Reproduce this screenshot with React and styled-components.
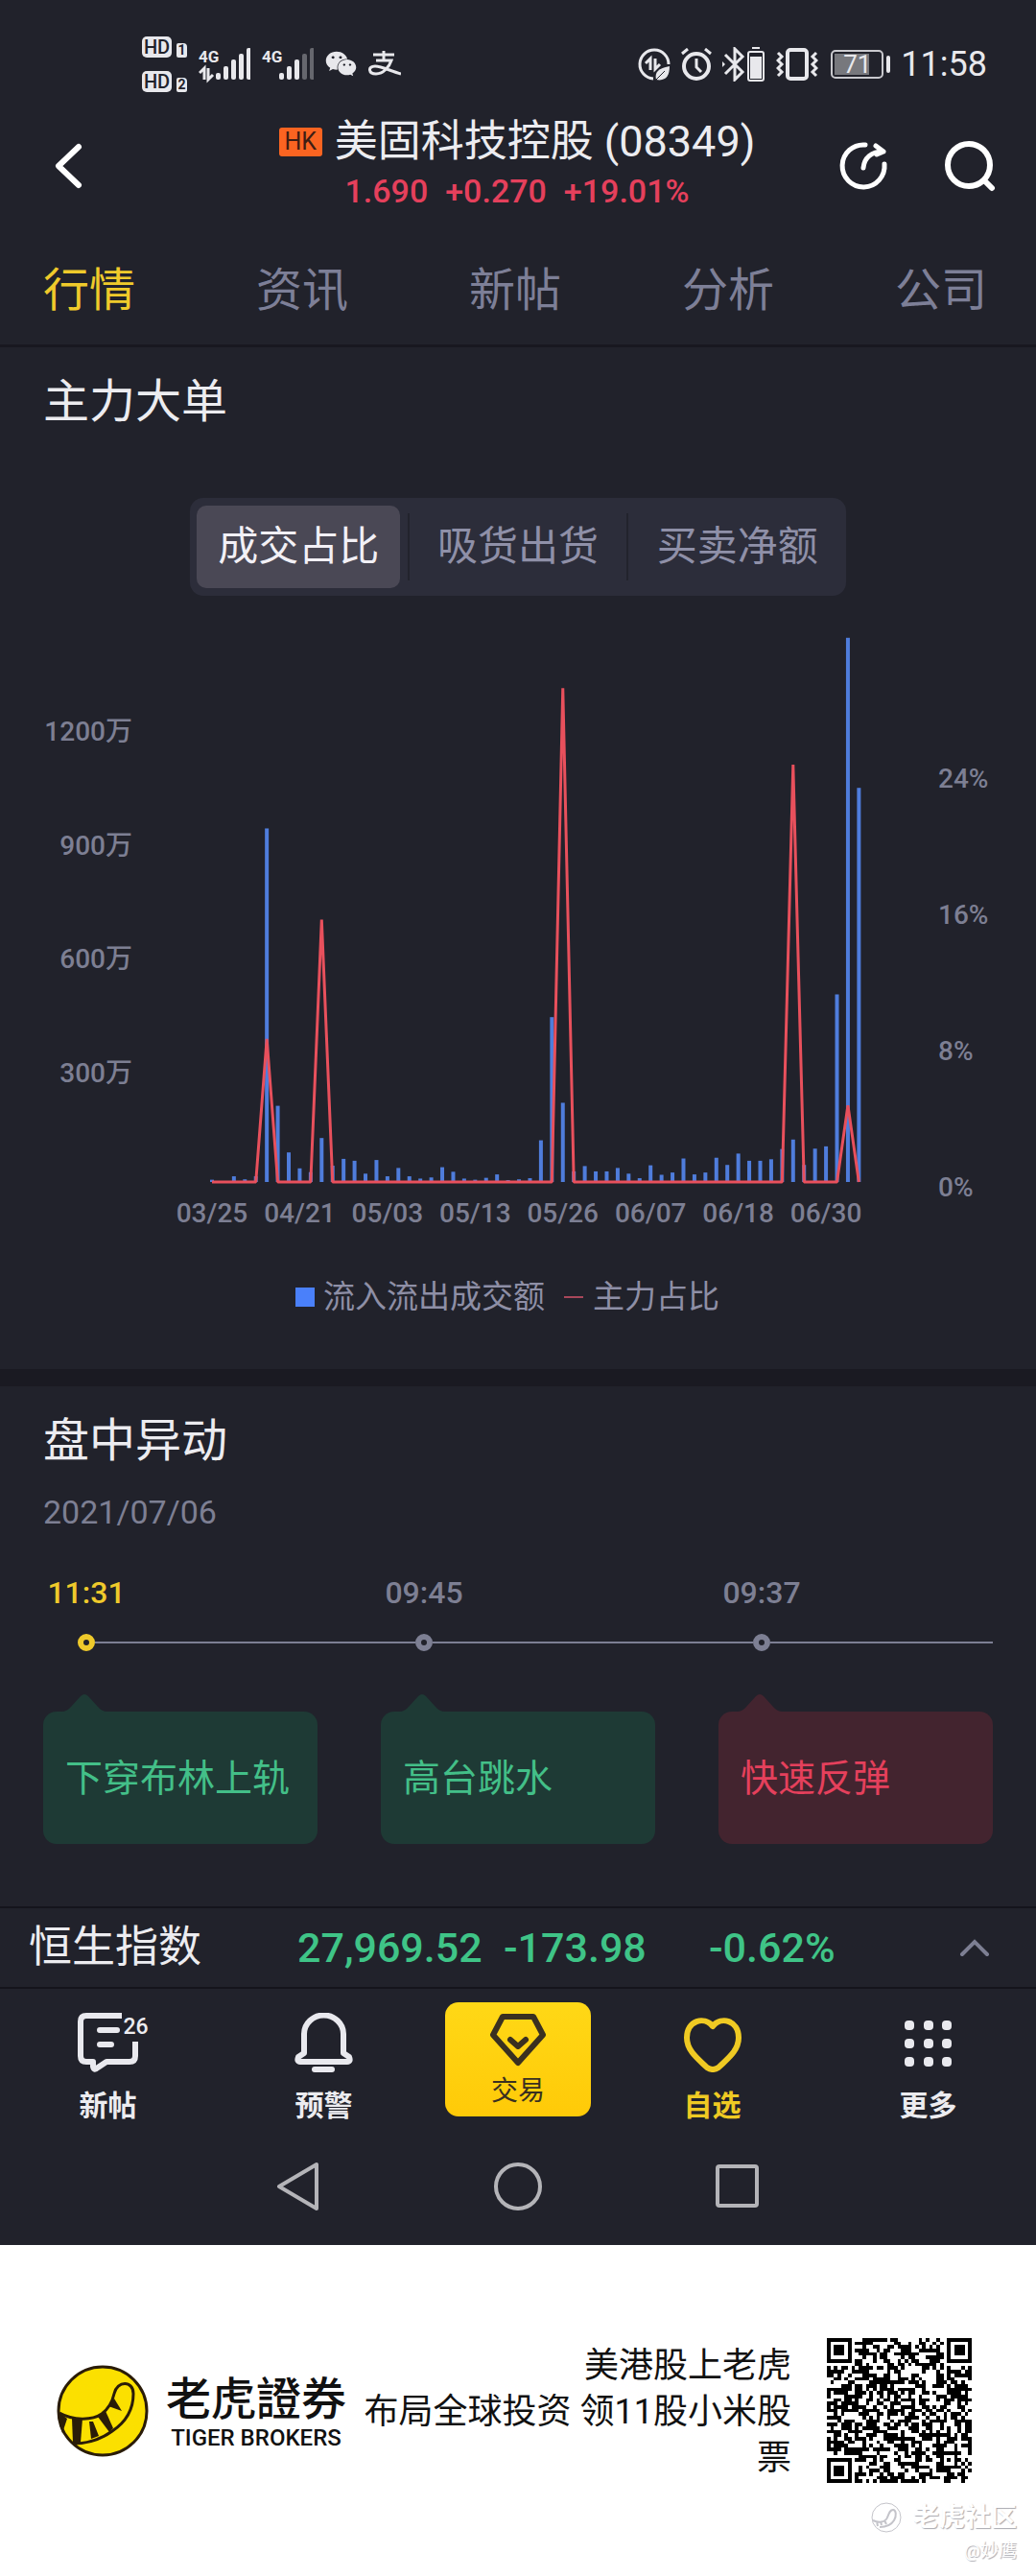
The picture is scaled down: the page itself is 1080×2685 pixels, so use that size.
import React, { useState } from 'react';
import styled, { createGlobalStyle } from 'styled-components';
import { FaWeixin } from 'react-icons/fa';

const tabs = ['行情', '资讯', '新帖', '分析', '公司'];
const modes = ['成交占比', '吸货出货', '买卖净额'];

// turnover per day, in units of 万
const turnover = [
    6, 0, 15, 7, 15, 933, 201, 78, 36, 26, 116, 43, 61, 56, 22,
    58, 15, 37, 15, 9, 12, 39, 27, 9, 6, 11, 20, 5, 7, 10,
    110, 435, 209, 28, 42, 28, 28, 37, 22, 10, 44, 19, 25, 62, 20,
    25, 64, 45, 75, 56, 56, 60, 87, 112, 45, 88, 94, 495, 1436, 1040,
];
// share of big orders in %, all other days are 0
const share = { 5: 8.4, 10: 15.4, 32: 29, 53: 24.5, 58: 4.5 };
const dates = ['03/25', '04/21', '05/03', '05/13', '05/26', '06/07', '06/18', '06/30'];

const events = [
    { time: '11:31', text: '下穿布林上轨', active: true },
    { time: '09:45', text: '高台跳水' },
    { time: '09:37', text: '快速反弹', up: true },
];

const BASE = 611;
const dayX = (i) => 221 + i * 11.43;

const Chart = () => {
    const line = turnover
        .map((v, i) => `${dayX(i)},${BASE - (share[i] || 0) * 17.75}`)
        .join(' ');
    return (
        <ChartSvg viewBox="0 0 1080 679" role="img" aria-label="成交占比">
            {[1200, 900, 600, 300].map((v) => (
                <text key={v} x="138" y={625 - v * 0.395} textAnchor="end">{v}万</text>
            ))}
            {[24, 16, 8, 0].map((v) => (
                <text key={v} x="978" y={626 - v * 17.75}>{v}%</text>
            ))}
            {turnover.map((v, i) => (
                <rect key={i} x={dayX(i) - 2} y={BASE - v * 0.395} width="4" height={v * 0.395} fill="#4f7ddc" />
            ))}
            <polyline points={line} fill="none" stroke="#e8505c" strokeWidth="3" strokeLinejoin="bevel" />
            {dates.map((d, i) => (
                <text key={d} x={dayX(i * 8)} y="653" textAnchor="middle">{d}</text>
            ))}
        </ChartSvg>
    );
};

const Signal = ({ level, data }) => (
    <svg width="54" height="46" viewBox="0 -6 54 46" fill="#e8e8ec">
        <text x="0" y="15" fontSize="17" fontWeight="700">4G</text>
        {data && <path d="M1 26l5-5v12M10 21v12l5-5" fill="none" stroke="#e8e8ec" strokeWidth="3" />}
        {[26, 19, 12, 6, 0].map((y, i) => (
            <rect key={y} x={18 + i * 8} y={y} width="5" height={33 - y} rx="2" opacity={i < level ? 1 : 0.35} />
        ))}
    </svg>
);

const Alipay = () => (
    <svg width="34" height="27" viewBox="0 0 34 27" fill="none" stroke="#e8e8ec" strokeWidth="3">
        <path d="M16 0v10M5 4h22M8 10h16c-2 6-8 14-16 14-8 0-9-8-1-8 7 0 16 5 27 8" />
    </svg>
);

const DataSaver = () => (
    <svg width="34" height="34" viewBox="0 0 34 34" fill="none" stroke="#e8e8ec" strokeWidth="3">
        <path d="M16 32A15 15 0 1 1 32 17" />
        <path d="M8 16l5-5v12M18 11v11l5-5" />
        <path d="M19 33c-2-9 4-12 14-14 0 10-4 16-14 14z" fill="#e8e8ec" stroke="none" />
        <path d="M19 33l9-9" stroke="#21222b" strokeWidth="1" />
    </svg>
);

const Alarm = () => (
    <svg width="34" height="34" viewBox="0 0 34 34" fill="none" stroke="#e8e8ec" strokeWidth="4">
        <circle cx="17" cy="19" r="13" />
        <path d="M17 11v9l5 5" strokeWidth="3" />
        <path d="M2 6l6-5M32 6l-6-5" strokeWidth="3" />
    </svg>
);

const Bluetooth = () => (
    <svg width="46" height="36" viewBox="0 0 46 36" fill="none" stroke="#e8e8ec">
        <path d="M3 8l18 18-8 8V2l8 8L3 28" strokeWidth="3" />
        <path d="M0 15v6l3-3z" fill="#e8e8ec" stroke="none" />
        <rect x="27" y="5" width="16" height="30" rx="2" strokeWidth="2" />
        <path d="M31 1h8" strokeWidth="2" />
        <path d="M29 10h12v23h-12z" fill="#e8e8ec" stroke="none" />
    </svg>
);

const Vibrate = () => (
    <svg width="44" height="36" viewBox="0 0 44 36" fill="none" stroke="#e8e8ec" strokeWidth="3">
        <rect x="12" y="3" width="20" height="30" rx="3" strokeWidth="4" />
        <path d="M2 6l4 4-4 4 4 4-4 4 4 4-4 4M42 6l-4 4 4 4-4 4 4 4-4 4 4 4" />
    </svg>
);

const Back = () => (
    <svg width="34" height="50" viewBox="0 0 34 50" fill="none" stroke="#fff" strokeWidth="6" strokeLinecap="round" strokeLinejoin="round">
        <path d="M28 5L7 25l21 20" />
    </svg>
);

const Share = () => (
    <svg width="52" height="52" viewBox="0 0 52 52" fill="none" stroke="#fff" strokeWidth="5" strokeLinecap="round" strokeLinejoin="round">
        <path d="M28 4A22 22 0 1 0 48 24" />
        <path d="M26 28c1-10 8-17 21-17M39 5l8 6-7 3" />
    </svg>
);

const Search = () => (
    <svg width="54" height="54" viewBox="0 0 54 54" fill="none" stroke="#fff" strokeWidth="6" strokeLinecap="round">
        <circle cx="26" cy="26" r="22" />
        <path d="M43 43l7 7" />
    </svg>
);

const PostIcon = () => (
    <svg width="64" height="62" viewBox="0 0 64 62" fill="none" stroke="#e9e9ee" strokeWidth="6" strokeLinecap="round" strokeLinejoin="round">
        <path d="M46 3H9q-6 0-6 6v36q0 6 6 6h7v5q1 5 5 1l9-6h24q6 0 6-6V30" strokeLinecap="butt" />
        <path d="M23 18h18M23 33h12" />
    </svg>
);

const BellIcon = () => (
    <svg width="62" height="62" viewBox="0 0 62 62" fill="none" stroke="#e9e9ee" strokeWidth="6" strokeLinecap="round" strokeLinejoin="round">
        <path d="M10 42V22a20 19 0 0 1 41 0v20l6 4q2 5-2 5H6q-4 0-2-5z" />
        <path d="M21 59h18" />
    </svg>
);

const DiamondIcon = () => (
    <svg width="60" height="56" viewBox="0 0 60 56" fill="none" stroke="#3a3020" strokeWidth="6" strokeLinecap="round" strokeLinejoin="round">
        <path d="M14 4h32l10 19-26 29L4 23z" />
        <path d="M22 28l8 7 8-7" />
    </svg>
);

const HeartIcon = () => (
    <svg width="62" height="62" viewBox="0 0 62 62" fill="none" stroke="#efca23" strokeWidth="6" strokeLinejoin="round">
        <path d="M31 14C22 3 4 8 4 26c0 14 13 23 21 31q6 4 12 0c8-8 21-17 21-31C58 8 40 3 31 14z" />
    </svg>
);

const MoreIcon = () => (
    <svg width="62" height="62" viewBox="0 0 62 62" fill="#e9e9ee">
        {[8, 27, 46].map((y) => [6, 26, 45].map((x) => (
            <rect key={`${x}-${y}`} x={x} y={y} width="10" height="10" rx="4" />
        )))}
    </svg>
);

const TigerLogo = () => (
    <svg width="96" height="96" viewBox="0 0 96 96">
        <circle cx="48" cy="48" r="46" fill="#fbe000" stroke="#2a1c08" strokeWidth="3" />
        <g fill="#2a1c08">
            <path d="M2 49l9 7-5 15q-4-10-4-22z" />
            <path d="M16 56h11l-2 25h-8z" />
            <path d="M34 59h4l6 15-8 3z" />
            <path d="M43 54l8-6 8 18-4 4z" />
            <path d="M54 43l6-8 8 13z" />
        </g>
        <path
            d="M3 50c14 8 34 8 44 1 8-6 11-12 13-21 3-14 20-14 20 0 0 18-10 31-22 39-11 8-26 13-41 13"
            fill="none"
            stroke="#2a1c08"
            strokeWidth="3"
        />
    </svg>
);

const QR = 41;

const inFinder = (x, y) => {
    const spots = [[0, 0], [QR - 7, 0], [0, QR - 7]];
    for (const [fx, fy] of spots) {
        const dx = x - fx;
        const dy = y - fy;
        if (dx >= -1 && dx <= 7 && dy >= -1 && dy <= 7) {
            const r = Math.max(Math.abs(dx - 3), Math.abs(dy - 3));
            return r === 3 || r < 2 ? 1 : 0;
        }
    }
    const r = Math.max(Math.abs(x - 34), Math.abs(y - 34));
    if (r < 3) return r === 1 ? 0 : 1;
    return -1;
};

const qrPath = () => {
    let seed = 8349;
    let d = '';
    for (let y = 0; y < QR; y++) {
        for (let x = 0; x < QR; x++) {
            seed = (seed * 1103515245 + 12345) % 2147483648;
            const fixed = inFinder(x, y);
            const on = fixed === -1 ? (seed >> 12) % 100 < 52 : fixed === 1;
            if (on) d += `M${x} ${y}h1v1h-1z`;
        }
    }
    return d;
};

const App = () => {
    const [tab, setTab] = useState(tabs[0]);
    const [mode, setMode] = useState(modes[0]);

    return (
        <Page>
            <GlobalStyle />
            <StatusBar>
                <StatusGroup $gap={12}>
                    <HdStack>
                        <HdRow><Hd>HD</Hd><Sim>1</Sim></HdRow>
                        <HdRow><Hd>HD</Hd><Sim>2</Sim></HdRow>
                    </HdStack>
                    <Signal level={5} data />
                    <Signal level={3} />
                    <FaWeixin size={33} />
                    <Alipay />
                </StatusGroup>
                <StatusGroup $gap={10}>
                    <DataSaver />
                    <Alarm />
                    <Bluetooth />
                    <Vibrate />
                    <Battery><BatteryLevel>71</BatteryLevel></Battery>
                    <Clock>11:58</Clock>
                </StatusGroup>
            </StatusBar>

            <Header>
                <IconButton aria-label="返回"><Back /></IconButton>
                <Stock>
                    <StockName><Market>HK</Market>美固科技控股 (08349)</StockName>
                    <Price><span>1.690</span><span>+0.270</span><span>+19.01%</span></Price>
                </Stock>
                <Actions>
                    <IconButton aria-label="分享"><Share /></IconButton>
                    <IconButton aria-label="搜索"><Search /></IconButton>
                </Actions>
            </Header>

            <Tabs>
                {tabs.map((t) => (
                    <Tab key={t} $active={t === tab} onClick={() => setTab(t)}>{t}</Tab>
                ))}
            </Tabs>

            <Section>
                <Title>主力大单</Title>
                <Segments>
                    {modes.map((m) => (
                        <Segment key={m} $active={m === mode} onClick={() => setMode(m)}>
                            <span>{m}</span>
                        </Segment>
                    ))}
                </Segments>
                <Chart />
                <Legend>
                    <Square />流入流出成交额<Dash />主力占比
                </Legend>
            </Section>

            <Divider />

            <Section>
                <Title>盘中异动</Title>
                <DateText>2021/07/06</DateText>
                <Timeline>
                    {events.map((e) => (
                        <Event key={e.time}>
                            <Time $active={e.active}>{e.time}</Time>
                            <Track><Dot $active={e.active} /><Line /></Track>
                            <Bubble $up={e.up}>
                                <Pointer viewBox="0 0 48 18"><path d="M0 18Q6 18 10 13L20 2Q24-2 28 2L38 13Q42 18 48 18z" /></Pointer>
                                {e.text}
                            </Bubble>
                        </Event>
                    ))}
                </Timeline>
            </Section>

            <IndexBar>
                <IndexName>恒生指数</IndexName>
                <span>27,969.52</span>
                <span>-173.98</span>
                <span>-0.62%</span>
                <IconButton aria-label="展开">
                    <svg width="32" height="20" viewBox="0 0 32 20" fill="none" stroke="#7d7f93" strokeWidth="4" strokeLinecap="round">
                        <path d="M3 17L16 4l13 13" />
                    </svg>
                </IconButton>
            </IndexBar>

            <Nav>
                <NavItem><PostIcon /><Badge>26</Badge>新帖</NavItem>
                <NavItem><BellIcon />预警</NavItem>
                <Trade><DiamondIcon />交易</Trade>
                <NavItem $active><HeartIcon />自选</NavItem>
                <NavItem><MoreIcon />更多</NavItem>
            </Nav>

            <SystemNav>
                <IconButton aria-label="后退">
                    <SysIcon viewBox="0 0 54 54"><path d="M46 4v46L7 27z" /></SysIcon>
                </IconButton>
                <IconButton aria-label="主页">
                    <SysIcon viewBox="0 0 54 54"><circle cx="27" cy="27" r="23" /></SysIcon>
                </IconButton>
                <IconButton aria-label="最近任务">
                    <SysIcon viewBox="0 0 54 54"><rect x="6" y="6" width="41" height="41" rx="2" /></SysIcon>
                </IconButton>
            </SystemNav>

            <Footer>
                <TigerLogo />
                <Brand>
                    <BrandName>老虎證券</BrandName>
                    <BrandSub>TIGER BROKERS</BrandSub>
                </Brand>
                <Slogan>美港股上老虎<br />布局全球投资 领11股小米股票</Slogan>
                <QrCode viewBox="0 0 41 41" shapeRendering="crispEdges"><path d={qrPath()} /></QrCode>
                <Watermark>
                    <WatermarkName>
                        <svg width="32" height="32" viewBox="0 0 32 32" fill="none" stroke="#c4c4ca" strokeWidth="1">
                            <circle cx="16" cy="16" r="15" />
                            <path d="M2 19c6 3 13 2 15-3s3-8 6-8 4 6 1 11-9 7-15 7M6 20l1 5M10 20l1 4M14 19l2 4" strokeWidth="2" />
                        </svg>
                        老虎社区
                    </WatermarkName>
                    <WatermarkUser>@妙鹰</WatermarkUser>
                </Watermark>
            </Footer>
        </Page>
    );
};

export default App;

const GlobalStyle = createGlobalStyle`
    * {
        box-sizing: border-box;
    }
    body {
        margin: 0;
        font-family: Roboto, 'Noto Sans CJK SC', sans-serif;
        background: #fff;
    }
    button {
        padding: 0;
        border: 0;
        background: none;
        font-family: inherit;
        cursor: pointer;
    }
    svg {
        display: block;
        flex-shrink: 0;
    }
`;

const Page = styled.div`
    width: 100%;
    background: #21222b;
    color: #ececf0;
`;

const StatusBar = styled.div`
    height: 122px;
    padding: 11px 51px 0 148px;
    display: flex;
    justify-content: space-between;
    align-items: center;
    color: #e8e8ec;
`;

const StatusGroup = styled.div`
    display: flex;
    align-items: center;
    gap: ${(p) => p.$gap}px;
`;

const HdStack = styled.div`
    display: flex;
    flex-direction: column;
    gap: 14px;
`;

const HdRow = styled.div`
    display: flex;
    align-items: flex-end;
    gap: 5px;
`;

const Hd = styled.span`
    width: 31px;
    height: 22px;
    border-radius: 5px;
    background: #e8e8ec;
    color: #21222b;
    font-size: 20px;
    font-weight: 500;
    line-height: 22px;
    text-align: center;
`;

const Sim = styled.span`
    width: 11px;
    height: 15px;
    border-radius: 2px 4px 2px 2px;
    background: #e8e8ec;
    color: #21222b;
    font-size: 14px;
    font-weight: 700;
    line-height: 15px;
    text-align: center;
`;

const Battery = styled.div`
    position: relative;
    width: 55px;
    height: 30px;
    margin: 0 8px 0 3px;
    padding: 2px;
    border: 2px solid #c9c9ce;
    border-radius: 5px;

    &::after {
        content: '';
        position: absolute;
        top: 4px;
        right: -9px;
        width: 4px;
        height: 18px;
        border-radius: 2px;
        background: #e8e8ec;
    }
`;

const BatteryLevel = styled.div`
    height: 22px;
    background: linear-gradient(90deg, #77787d 76%, transparent 76%);
    font-size: 26px;
    line-height: 22px;
    text-align: center;
`;

const Clock = styled.span`
    font-size: 36px;
    line-height: 40px;
`;

const Header = styled.header`
    padding: 0 42px 0 54px;
    display: flex;
    justify-content: space-between;
    align-items: center;
`;

const IconButton = styled.button`
    display: flex;
    align-items: center;
    justify-content: center;
`;

const Stock = styled.div`
    flex: 1;
    padding-left: 116px;
    display: flex;
    flex-direction: column;
    align-items: center;
    white-space: nowrap;
`;

const StockName = styled.h1`
    margin: 0;
    display: flex;
    align-items: center;
    gap: 13px;
    font-size: 45px;
    font-weight: 400;
    line-height: 52px;
`;

const Market = styled.span`
    width: 45px;
    height: 30px;
    border-radius: 3px;
    background: #fa6421;
    color: #3d1d14;
    font-size: 25px;
    line-height: 30px;
    text-align: center;
`;

const Price = styled.div`
    display: flex;
    gap: 18px;
    color: #e5405c;
    font-size: 34px;
    font-weight: 500;
    line-height: 50px;
`;

const Actions = styled.div`
    display: flex;
    gap: 58px;
`;

const Tabs = styled.nav`
    height: 138px;
    padding: 23px 51px 0 45px;
    border-bottom: 3px solid #181820;
    display: flex;
    justify-content: space-between;
    align-items: center;
`;

const Tab = styled.button`
    color: ${(p) => (p.$active ? '#efca2b' : '#7d7f97')};
    font-size: 48px;
    line-height: 60px;
`;

const Section = styled.section`
    padding-top: 27px;
`;

const Title = styled.h2`
    margin: 0;
    padding: 0 45px;
    font-size: 48px;
    font-weight: 400;
    line-height: 60px;
`;

const Segments = styled.div`
    width: 684px;
    max-width: 100%;
    height: 102px;
    margin: 70px auto 0;
    border-radius: 14px;
    background: #2c2d3a;
    display: flex;
    align-items: center;
`;

const Segment = styled.button`
    flex: 1;
    height: 70px;
    display: flex;
    align-items: center;
    justify-content: center;
    color: ${(p) => (p.$active ? '#f2f0f6' : '#8f90a8')};
    font-size: 42px;

    &:not(:last-child) {
        border-right: 2px solid #22232d;
    }

    span {
        height: 86px;
        padding: 0 22px;
        border-radius: 10px;
        background: ${(p) => (p.$active ? '#4a4855' : 'transparent')};
        line-height: 86px;
        white-space: nowrap;
    }
`;

const ChartSvg = styled.svg`
    width: 100%;
    height: auto;

    text {
        fill: #7d7f93;
        font-size: 28px;
        font-weight: 500;
    }
`;

const Legend = styled.div`
    padding: 32px 22px 55px 0;
    display: flex;
    justify-content: center;
    align-items: center;
    color: #8e8fa6;
    font-size: 33px;
    line-height: 40px;
`;

const Square = styled.i`
    width: 20px;
    height: 20px;
    margin-right: 9px;
    background: #4a80fa;
`;

const Dash = styled.i`
    width: 20px;
    height: 2px;
    margin: 0 10px 0 20px;
    background: #a8475a;
`;

const Divider = styled.div`
    height: 18px;
    background: #1a1a22;
`;

const DateText = styled.p`
    margin: 24px 0 0;
    padding: 0 45px;
    color: #7d7f93;
    font-size: 34px;
    line-height: 40px;
`;

const Timeline = styled.ol`
    margin: 44px 0 0;
    padding: 0 45px 65px;
    display: grid;
    grid-template-columns: repeat(3, 1fr);
    gap: 66px;
    list-style: none;
    overflow: hidden;
`;

const Time = styled.div`
    width: 90px;
    color: ${(p) => (p.$active ? '#efca2b' : '#7d7f93')};
    font-size: 32px;
    font-weight: 500;
    line-height: 40px;
    text-align: center;
`;

const Track = styled.div`
    margin: 23px -102px 0 0;
    padding-left: 36px;
    display: flex;
    align-items: center;
`;

const Dot = styled.i`
    width: 18px;
    height: 18px;
    border: 6px solid ${(p) => (p.$active ? '#efca2b' : '#7d7f93')};
    border-radius: 50%;
`;

const Line = styled.i`
    flex: 1;
    height: 2px;
    background: #7d7f93;
`;

const Event = styled.li`
    &:last-child ${Track} {
        margin-right: 0;
    }
`;

const Bubble = styled.div`
    position: relative;
    height: 138px;
    margin-top: 63px;
    padding: 2px 23px 0;
    border-radius: 14px;
    background: ${(p) => (p.$up ? '#43242f' : '#1e3a35')};
    color: ${(p) => (p.$up ? '#e5405c' : '#43bf88')};
    fill: ${(p) => (p.$up ? '#43242f' : '#1e3a35')};
    font-size: 39px;
    line-height: 136px;
    white-space: nowrap;
`;

const Pointer = styled.svg`
    position: absolute;
    left: 19px;
    bottom: 100%;
    width: 48px;
    height: 18px;
`;

const IndexBar = styled.div`
    padding: 0 48px 0 30px;
    border-top: 2px solid #14141c;
    border-bottom: 2px solid #14141c;
    display: grid;
    grid-template-columns: 280px 215px 214px 1fr auto;
    align-items: center;
    color: #3fc487;
    font-size: 43px;
    font-weight: 500;
    line-height: 82px;
`;

const IndexName = styled.span`
    color: #ececf0;
    font-size: 45px;
    font-weight: 400;
`;

const Nav = styled.nav`
    height: 145px;
    display: grid;
    grid-template-columns: 5fr 5fr 4fr 5fr 5fr;
    align-items: start;
`;

const NavItem = styled.button`
    position: relative;
    padding-top: 25px;
    display: flex;
    flex-direction: column;
    align-items: center;
    gap: 17px;
    color: ${(p) => (p.$active ? '#efca23' : '#ececf0')};
    font-size: 30px;
    font-weight: 700;
    line-height: 36px;
`;

const Badge = styled.span`
    position: absolute;
    left: calc(50% + 16px);
    top: 28px;
    color: #ececf0;
    font-size: 23px;
    font-weight: 500;
    line-height: 24px;
`;

const Trade = styled.button`
    justify-self: center;
    width: 152px;
    height: 119px;
    margin-top: 14px;
    padding-top: 2px;
    border-radius: 14px;
    background: linear-gradient(#ffd816, #ffca08);
    display: flex;
    flex-direction: column;
    align-items: center;
    justify-content: center;
    gap: 9px;
    color: #3a3020;
    font-size: 28px;
    line-height: 34px;
`;

const SystemNav = styled.nav`
    height: 122px;
    padding: 0 284px;
    display: flex;
    justify-content: space-between;
    align-items: center;
`;

const SysIcon = styled.svg`
    width: 54px;
    height: 54px;
    fill: none;
    stroke: #b4b4b8;
    stroke-width: 4;
    stroke-linejoin: round;
`;

const Footer = styled.footer`
    position: relative;
    height: 345px;
    padding: 0 67px 0 59px;
    display: flex;
    align-items: center;
    background: #fff;
    color: #111;
`;

const Brand = styled.div`
    margin-left: 18px;
    display: flex;
    flex-direction: column;
    align-items: center;
`;

const BrandName = styled.strong`
    font-family: Roboto, 'Noto Sans CJK TC', sans-serif;
    font-size: 47px;
    font-weight: 500;
    line-height: 56px;
`;

const BrandSub = styled.span`
    font-size: 24px;
    font-weight: 500;
    line-height: 24px;
    white-space: nowrap;
`;

const Slogan = styled.p`
    flex: 1;
    margin: 2px 37px 0 10px;
    font-size: 36px;
    line-height: 48px;
    text-align: right;
`;

const QrCode = styled.svg`
    width: 151px;
    height: 151px;
`;

const Watermark = styled.div`
    position: absolute;
    right: 20px;
    bottom: 11px;
    color: #fff;
    text-align: right;
    text-shadow: 1px 1px 1px #a9a9b0;
`;

const WatermarkName = styled.div`
    display: flex;
    align-items: center;
    gap: 12px;
    font-size: 27px;
    font-weight: 700;
    line-height: 40px;
`;

const WatermarkUser = styled.div`
    font-size: 19px;
    line-height: 30px;
`;
